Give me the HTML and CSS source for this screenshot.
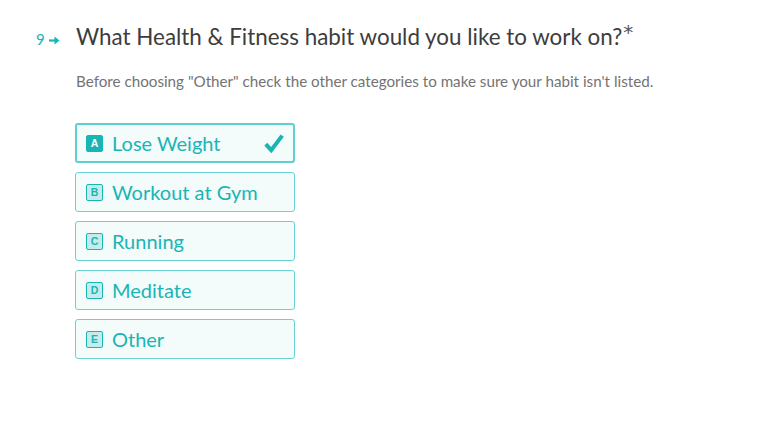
FILE: index.html
```html
<!doctype html>
<html lang="en">
<head>
    <meta charset="UTF-8">
    <title>Question 9</title>
    <link rel="stylesheet" href="styles.css">
</head>
<body>
<div class="question">
    <div class="head">
        <span class="num">9</span>
        <svg class="arrow" width="11" height="9" viewBox="0 0 11 9">
            <path d="M0 4.5h7" stroke="#19b5b4" stroke-width="2.2"/>
            <path d="M5.5 0.5l5 4-5 4z" fill="#19b5b4"/>
        </svg>
        <h1 class="title">What Health &amp; Fitness habit would you like to work on?<span class="req">*</span></h1>
    </div>
    <p class="desc">Before choosing "Other" check the other categories to make sure your habit isn't listed.</p>
    <div class="choices">
        <div class="choice selected">
            <span class="key">A</span>
            <span class="label">Lose Weight</span>
            <svg class="check" width="20" height="19" viewBox="0 0 20 19">
                <path d="M1.8 10.2l5.4 6L18.2 1.6" fill="none" stroke="#19b5b4" stroke-width="4" stroke-linejoin="miter"/>
            </svg>
        </div>
        <div class="choice">
            <span class="key">B</span>
            <span class="label">Workout at Gym</span>
        </div>
        <div class="choice">
            <span class="key">C</span>
            <span class="label">Running</span>
        </div>
        <div class="choice">
            <span class="key">D</span>
            <span class="label">Meditate</span>
        </div>
        <div class="choice">
            <span class="key">E</span>
            <span class="label">Other</span>
        </div>
    </div>
</div>
</body>
</html>
```

FILE: styles.css
```css
body {
    margin: 0;
    background: #fff;
    font-family: Lato, "Open Sans", sans-serif;
}

.question {
    padding: 17px 0 0 36px;
}

.head {
    display: flex;
    align-items: baseline;
}

.num {
    color: #19b5b4;
    font-size: 15px;
    width: 13px;
}

.arrow {
    margin-right: 16px;
}

.title {
    margin: 0;
    font-weight: 400;
    font-size: 22.4px;
    color: #3d3d3d;
    line-height: 30px;
}

.req {
    font-family: "DejaVu Sans", sans-serif;
    font-size: 20px;
    font-weight: 400;
    color: #555;
    vertical-align: 6px;
    margin-left: 1px;
}

.desc {
    margin: 20px 0 0 40px;
    font-size: 15.2px;
    color: #737373;
}

.choices {
    margin: 33px 0 0 39px;
    display: flex;
    flex-direction: column;
    gap: 9px;
}

.choice {
    box-sizing: border-box;
    width: 220px;
    height: 40px;
    display: flex;
    align-items: center;
    padding: 0 10px;
    border: 1px solid #6ad3d2;
    border-radius: 3px;
    background: #f3fbfb;
    color: #19b5b4;
}

.key {
    box-sizing: border-box;
    width: 17px;
    height: 17px;
    border: 1px solid #19b5b4;
    border-radius: 2px;
    background: #c5eceb;
    font-family: "Liberation Sans", sans-serif;
    font-size: 10.5px;
    font-weight: 700;
    line-height: 15px;
    text-align: center;
    margin-right: 9px;
}

.label {
    font-size: 20px;
}

.selected {
    border: 2px solid #5fd0cf;
    padding: 0 9px;
}

.selected .key {
    background: #19b5b4;
    color: #fff;
}

.check {
    margin-left: auto;
}
```
